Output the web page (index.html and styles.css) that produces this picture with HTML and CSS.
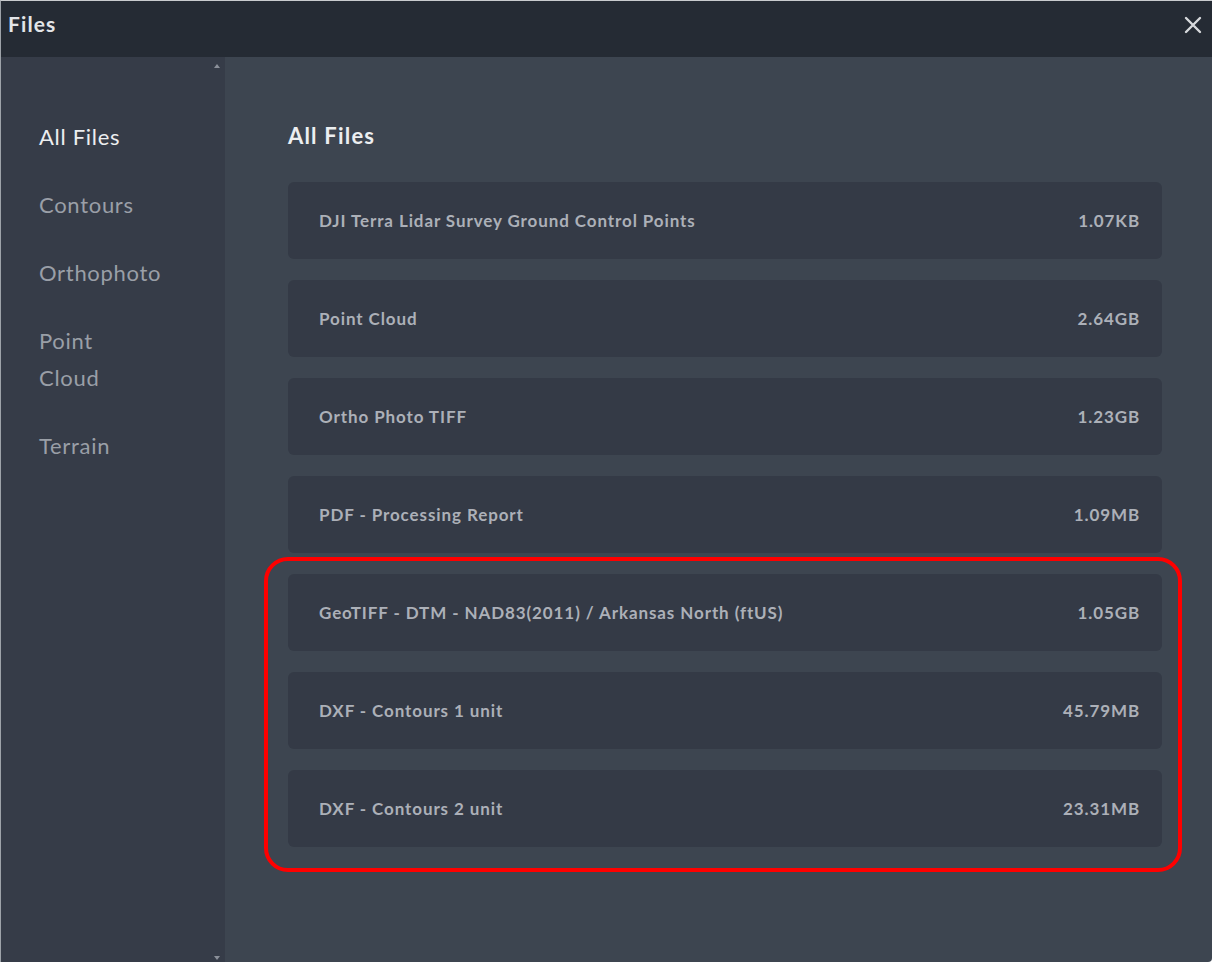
FILE: index.html
```html
<!DOCTYPE html>
<html>
  <head>
    <meta charset="UTF-8" />
    <title>Files</title>
    <meta name="viewport" content="width=device-width, initial-scale=1.0" />
    <link rel="stylesheet" href="styles.css">
  </head>
  <body>
    <div class="janela">
      <div class="cabecalho">
        <span class="titulo">Files</span>
        <span class="fechar">
          <svg width="18" height="18" viewBox="0 0 18 18">
            <path d="M2 2 L16 16 M16 2 L2 16" stroke="#d7d9dc" stroke-width="2.4" stroke-linecap="round" />
          </svg>
        </span>
      </div>

      <div class="corpo">
        <div class="lateral">
          <span class="seta seta-cima"></span>
          <ul class="menu">
            <li class="ativo">All Files</li>
            <li>Contours</li>
            <li>Orthophoto</li>
            <li>Point Cloud</li>
            <li>Terrain</li>
          </ul>
          <span class="seta seta-baixo"></span>
        </div>

        <div class="conteudo">
          <h2>All Files</h2>
          <div class="lista">
            <div class="arquivo"><span>DJI Terra Lidar Survey Ground Control Points</span><span>1.07KB</span></div>
            <div class="arquivo"><span>Point Cloud</span><span>2.64GB</span></div>
            <div class="arquivo"><span>Ortho Photo TIFF</span><span>1.23GB</span></div>
            <div class="arquivo"><span>PDF - Processing Report</span><span>1.09MB</span></div>
            <div class="arquivo"><span>GeoTIFF - DTM - NAD83(2011) / Arkansas North (ftUS)</span><span>1.05GB</span></div>
            <div class="arquivo"><span>DXF - Contours 1 unit</span><span>45.79MB</span></div>
            <div class="arquivo"><span>DXF - Contours 2 unit</span><span>23.31MB</span></div>
            <div class="destaque"></div>
          </div>
        </div>
      </div>
    </div>
  </body>
</html>
```

FILE: styles.css
```css
body {
  margin: 0;
  background: white;
  font-family: Lato, "Noto Sans", sans-serif;
}
.janela {
  width: 1211px;
  height: 961px;
  border-top: 1px solid #c9cbce;
  border-left: 1px solid #9ea3a9;
  border-bottom-right-radius: 4px;
  overflow: hidden;
  display: flex;
  flex-direction: column;
}
.cabecalho {
  height: 56px;
  background: #252b34;
  display: flex;
  align-items: center;
  justify-content: space-between;
  padding: 0 10px 0 7px;
}
.titulo {
  color: #e3e5e8;
  font-weight: bold;
  font-size: 21px;
  letter-spacing: 1.1px;
  margin-top: -11px;
}
.fechar {
  display: flex;
  margin-top: -8px;
}
.corpo {
  flex: 1;
  display: flex;
}
.lateral {
  width: 224px;
  background: #363c48;
  position: relative;
}
.seta {
  position: absolute;
  right: 5px;
  width: 0;
  height: 0;
  border-left: 3px solid transparent;
  border-right: 3px solid transparent;
}
.seta-cima {
  top: 7px;
  border-bottom: 4px solid #8b9099;
}
.seta-baixo {
  bottom: 2px;
  border-top: 4px solid #8b9099;
}
.menu {
  list-style: none;
  margin: 0;
  padding: 61px 0 0 38px;
}
.menu li {
  width: 100px;
  color: #9a9fa7;
  font-size: 22px;
  letter-spacing: 0.7px;
  line-height: 37px;
  margin-bottom: 31px;
}
.menu li.ativo {
  color: #eceef0;
}
.conteudo {
  flex: 1;
  background: #3d4550;
  padding: 0 50px 0 63px;
}
h2 {
  color: #eceef0;
  font-size: 22px;
  letter-spacing: 1.2px;
  margin: 65px 0 33px 0;
}
.lista {
  position: relative;
  display: flex;
  flex-direction: column;
  gap: 21px;
}
.arquivo {
  height: 77px;
  background: #343a46;
  border-radius: 6px;
  display: flex;
  align-items: center;
  justify-content: space-between;
  padding: 0 22px 0 31px;
  color: #acb0b8;
  font-weight: bold;
  font-size: 17px;
  letter-spacing: 0.9px;
}
.destaque {
  position: absolute;
  left: -24px;
  right: -20px;
  top: 375px;
  height: 307px;
  border: 4px solid #ff0000;
  border-radius: 24px;
}
```
